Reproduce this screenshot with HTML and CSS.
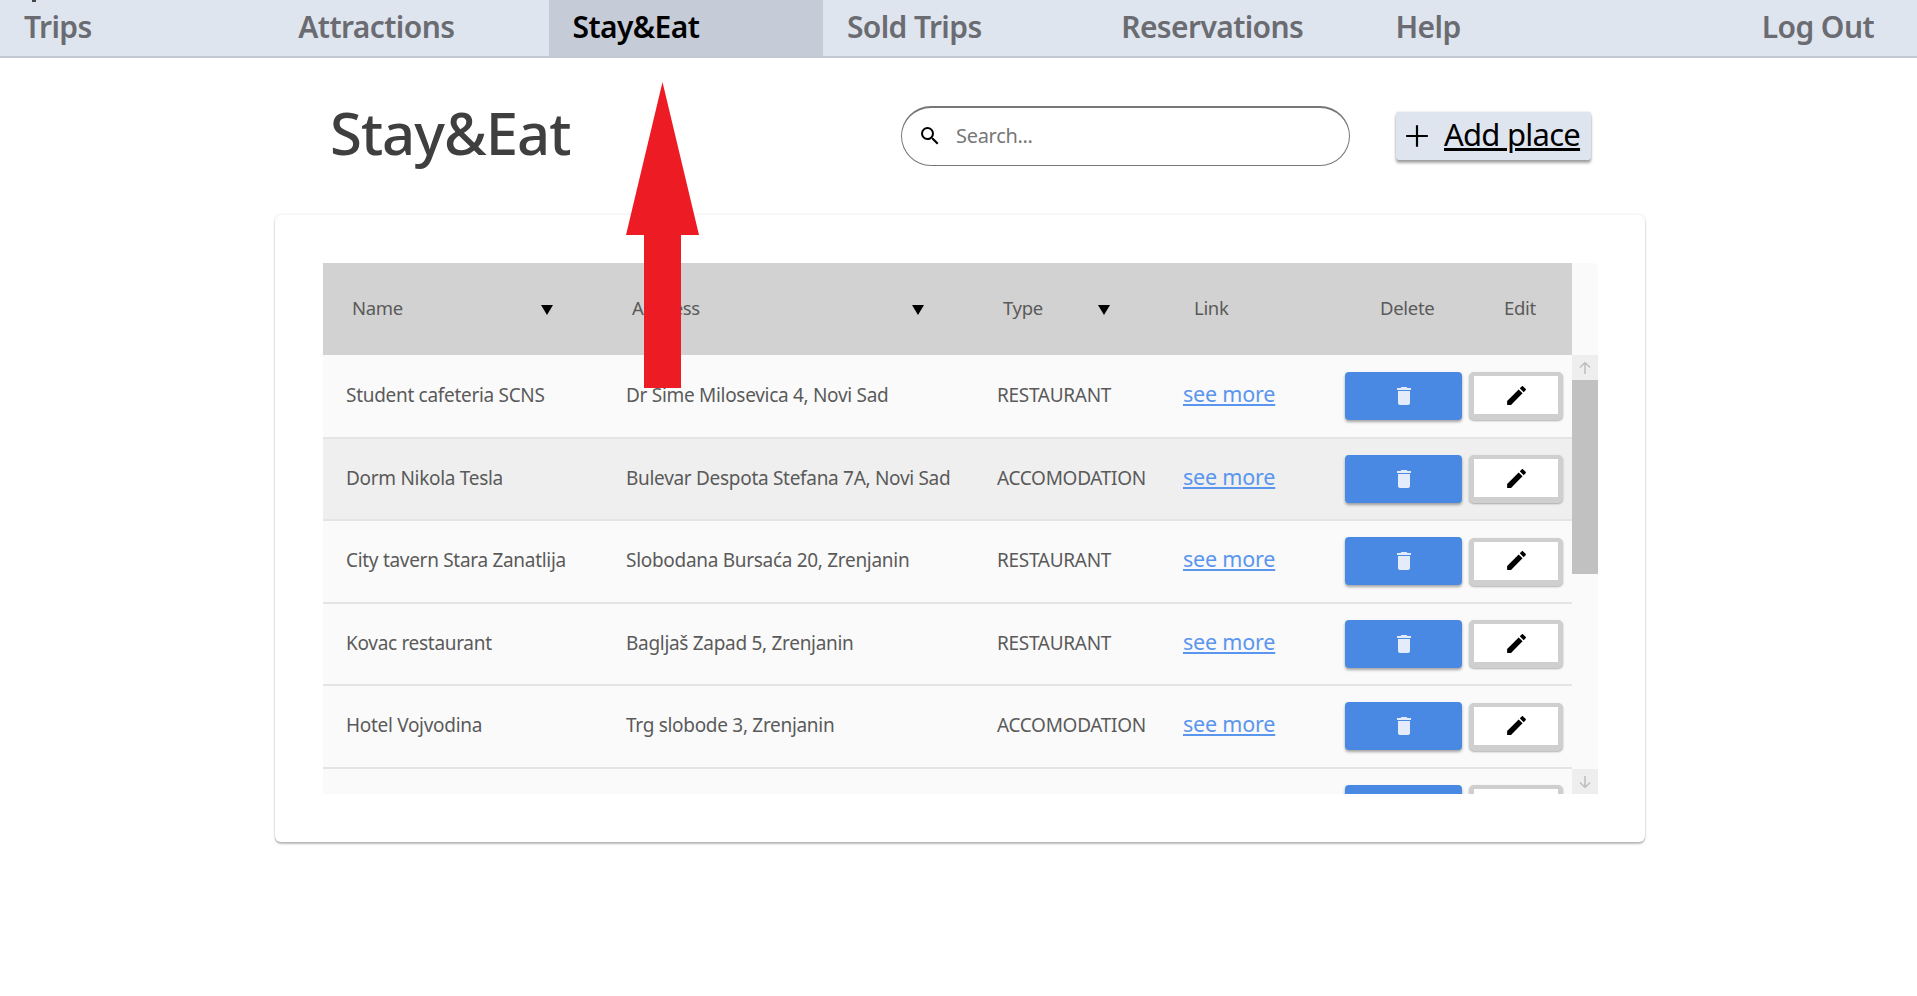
FILE: index.html
```html
<!DOCTYPE html>
<html>
<head>
    <meta name="viewport" content="width=device-width, initial-scale=1.0">
    <title>Stay&amp;Eat</title>
    <link rel="stylesheet" href="styles.css">
</head>
<body>
    <span class="corner-mark"></span>

    <!-- Navigation -->
    <nav class="navbar">
        <a class="nav-item">Trips</a>
        <a class="nav-item">Attractions</a>
        <a class="nav-item active">Stay&amp;Eat</a>
        <a class="nav-item">Sold Trips</a>
        <a class="nav-item">Reservations</a>
        <a class="nav-item">Help</a>
        <a class="nav-item logout">Log Out</a>
    </nav>

    <div class="page-header">
        <h1 class="page-title">Stay&amp;Eat</h1>
        <div class="search-box">
            <svg class="search-icon" viewBox="0 0 24 24"><path d="M15.5 14h-.79l-.28-.27A6.47 6.47 0 0 0 16 9.5 6.5 6.5 0 1 0 9.5 16c1.61 0 3.09-.59 4.23-1.57l.27.28v.79l5 4.99L20.49 19l-4.99-5zm-6 0C7.01 14 5 11.99 5 9.5S7.01 5 9.5 5 14 7.01 14 9.5 11.99 14 9.5 14z"/></svg>
            <span class="search-text">Search...</span>
        </div>
        <a class="add-btn">
            <svg class="add-icon" viewBox="0 0 24 24"><path d="M11 2h2v9h9v2h-9v9h-2v-9H2v-2h9z"/></svg>
            <span class="add-label">Add place</span>
        </a>
    </div>

    <!-- Places table -->
    <div class="card">
        <div class="table-wrap">
            <div class="table-main">
                <table class="places head">
                    <colgroup>
                        <col class="c-name"><col class="c-address"><col class="c-type"><col class="c-link"><col class="c-delete"><col class="c-edit">
                    </colgroup>
                    <tr>
                        <th><div class="th-sort">Name<span class="sort-arrow"></span></div></th>
                        <th><div class="th-sort">Address<span class="sort-arrow"></span></div></th>
                        <th><div class="th-sort">Type<span class="sort-arrow"></span></div></th>
                        <th class="th-link">Link</th>
                        <th class="th-action">Delete</th>
                        <th class="th-action">Edit</th>
                    </tr>
                </table>
                <div class="rows-view">
                    <table class="places">
                        <colgroup>
                            <col class="c-name"><col class="c-address"><col class="c-type"><col class="c-link"><col class="c-delete"><col class="c-edit">
                        </colgroup>
                        <tr>
                            <td>Student cafeteria SCNS</td>
                            <td>Dr Sime Milosevica 4, Novi Sad</td>
                            <td>RESTAURANT</td>
                            <td class="td-link"><a class="see-more">see more</a></td>
                            <td class="td-btn"><button class="btn-delete"><svg viewBox="0 0 24 24"><path d="M6 19c0 1.1.9 2 2 2h8c1.1 0 2-.9 2-2V7H6v12zM19 4h-3.5l-1-1h-5l-1 1H5v2h14V4z"/></svg></button></td>
                            <td class="td-btn td-edit"><button class="btn-edit"><svg viewBox="0 0 24 24"><path d="M3 17.25V21h3.75L17.81 9.94l-3.75-3.75L3 17.25zM20.71 7.04c.39-.39.39-1.02 0-1.41l-2.34-2.34c-.39-.39-1.02-.39-1.41 0l-1.83 1.83 3.75 3.75 1.83-1.83z"/></svg></button></td>
                        </tr>
                        <tr class="row-hover">
                            <td>Dorm Nikola Tesla</td>
                            <td>Bulevar Despota Stefana 7A, Novi Sad</td>
                            <td>ACCOMODATION</td>
                            <td class="td-link"><a class="see-more">see more</a></td>
                            <td class="td-btn"><button class="btn-delete"><svg viewBox="0 0 24 24"><path d="M6 19c0 1.1.9 2 2 2h8c1.1 0 2-.9 2-2V7H6v12zM19 4h-3.5l-1-1h-5l-1 1H5v2h14V4z"/></svg></button></td>
                            <td class="td-btn td-edit"><button class="btn-edit"><svg viewBox="0 0 24 24"><path d="M3 17.25V21h3.75L17.81 9.94l-3.75-3.75L3 17.25zM20.71 7.04c.39-.39.39-1.02 0-1.41l-2.34-2.34c-.39-.39-1.02-.39-1.41 0l-1.83 1.83 3.75 3.75 1.83-1.83z"/></svg></button></td>
                        </tr>
                        <tr>
                            <td>City tavern Stara Zanatlija</td>
                            <td>Slobodana Bursaća 20, Zrenjanin</td>
                            <td>RESTAURANT</td>
                            <td class="td-link"><a class="see-more">see more</a></td>
                            <td class="td-btn"><button class="btn-delete"><svg viewBox="0 0 24 24"><path d="M6 19c0 1.1.9 2 2 2h8c1.1 0 2-.9 2-2V7H6v12zM19 4h-3.5l-1-1h-5l-1 1H5v2h14V4z"/></svg></button></td>
                            <td class="td-btn td-edit"><button class="btn-edit"><svg viewBox="0 0 24 24"><path d="M3 17.25V21h3.75L17.81 9.94l-3.75-3.75L3 17.25zM20.71 7.04c.39-.39.39-1.02 0-1.41l-2.34-2.34c-.39-.39-1.02-.39-1.41 0l-1.83 1.83 3.75 3.75 1.83-1.83z"/></svg></button></td>
                        </tr>
                        <tr>
                            <td>Kovac restaurant</td>
                            <td>Bagljaš Zapad 5, Zrenjanin</td>
                            <td>RESTAURANT</td>
                            <td class="td-link"><a class="see-more">see more</a></td>
                            <td class="td-btn"><button class="btn-delete"><svg viewBox="0 0 24 24"><path d="M6 19c0 1.1.9 2 2 2h8c1.1 0 2-.9 2-2V7H6v12zM19 4h-3.5l-1-1h-5l-1 1H5v2h14V4z"/></svg></button></td>
                            <td class="td-btn td-edit"><button class="btn-edit"><svg viewBox="0 0 24 24"><path d="M3 17.25V21h3.75L17.81 9.94l-3.75-3.75L3 17.25zM20.71 7.04c.39-.39.39-1.02 0-1.41l-2.34-2.34c-.39-.39-1.02-.39-1.41 0l-1.83 1.83 3.75 3.75 1.83-1.83z"/></svg></button></td>
                        </tr>
                        <tr>
                            <td>Hotel Vojvodina</td>
                            <td>Trg slobode 3, Zrenjanin</td>
                            <td>ACCOMODATION</td>
                            <td class="td-link"><a class="see-more">see more</a></td>
                            <td class="td-btn"><button class="btn-delete"><svg viewBox="0 0 24 24"><path d="M6 19c0 1.1.9 2 2 2h8c1.1 0 2-.9 2-2V7H6v12zM19 4h-3.5l-1-1h-5l-1 1H5v2h14V4z"/></svg></button></td>
                            <td class="td-btn td-edit"><button class="btn-edit"><svg viewBox="0 0 24 24"><path d="M3 17.25V21h3.75L17.81 9.94l-3.75-3.75L3 17.25zM20.71 7.04c.39-.39.39-1.02 0-1.41l-2.34-2.34c-.39-.39-1.02-.39-1.41 0l-1.83 1.83 3.75 3.75 1.83-1.83z"/></svg></button></td>
                        </tr>
                        <tr>
                            <td></td>
                            <td></td>
                            <td></td>
                            <td></td>
                            <td class="td-btn"><button class="btn-delete"></button></td>
                            <td class="td-btn td-edit"><button class="btn-edit"></button></td>
                        </tr>
                    </table>
                </div>
            </div>

            <!-- Scrollbar -->
            <div class="scrollbar">
                <div class="scroll-btn"><svg viewBox="0 0 16 16"><path d="M8 2.5 3 7.5M8 2.5l5 5M8 2.5V14"/></svg></div>
                <div class="scroll-track"><div class="scroll-thumb"></div></div>
                <div class="scroll-btn"><svg viewBox="0 0 16 16"><path d="M8 13.5 3 8.5M8 13.5l5-5M8 13.5V2"/></svg></div>
            </div>
        </div>
    </div>

    <!-- Red annotation arrow drawn over the page -->
    <svg class="red-arrow" viewBox="0 0 73 306"><path d="M36.5 0 73 153H55V306H18V153H0z"/></svg>
</body>
</html>
```

FILE: styles.css
```css
body {
    margin: 0;
    background-color: white;
    font-family: "Noto Sans", "Open Sans", sans-serif;
    color: #444;
    height: 996px;
    overflow: hidden;
    position: relative;
}

.corner-mark {
    position: absolute;
    left: 32px;
    top: 0;
    width: 4px;
    height: 2px;
    background-color: #444;
}

/* Navigation */
.navbar {
    display: grid;
    grid-template-columns: repeat(6, 274.3px) 1fr;
    height: 56px;
    background-color: #dfe5ef;
    border-bottom: 2px solid #c3c8d4;
}

.nav-item {
    display: flex;
    align-items: center;
    padding: 0 0 4px 24px;
    font-size: 30px;
    font-weight: 600;
    letter-spacing: -0.6px;
    color: #6a6c72;
}

.nav-item.active {
    background-color: #c5ccd8;
    color: black;
}

.nav-item.logout {
    justify-content: flex-end;
    padding-right: 43px;
}

/* Title row */
.page-header {
    display: flex;
    align-items: center;
    height: 60px;
    margin-top: 48px;
    padding-left: 330px;
}

.page-title {
    width: 571px;
    margin: 0;
    font-size: 58px;
    font-weight: 500;
    letter-spacing: -1px;
    color: #3f3f3f;
    position: relative;
    top: -4px;
}

.search-box {
    display: flex;
    align-items: center;
    box-sizing: border-box;
    width: 449px;
    height: 60px;
    padding: 0 0 2px 16px;
    border: 1px solid #777;
    border-top-width: 2px;
    border-radius: 30px;
}

.search-icon {
    width: 24px;
    height: 24px;
}

.search-text {
    margin-left: 14px;
    font-size: 20px;
    letter-spacing: -0.3px;
    color: #777;
}

.add-btn {
    display: flex;
    align-items: center;
    box-sizing: border-box;
    width: 195px;
    height: 48px;
    margin-left: 46px;
    padding-left: 8px;
    background-color: #dfe5ef;
    border-radius: 3px;
    box-shadow: 0 3px 3px rgba(0, 0, 0, 0.35), 0 0 2px rgba(0, 0, 0, 0.2);
    color: black;
}

.add-icon {
    width: 26px;
    height: 26px;
}

.add-label {
    margin: 0 0 5px 14px;
    font-size: 31px;
    letter-spacing: -0.75px;
    text-decoration: underline;
}

/* Card */
.card {
    box-sizing: border-box;
    width: 1370px;
    height: 627px;
    margin: 49px 0 0 275px;
    padding: 48px;
    border-radius: 6px;
    box-shadow: 0 2px 2px rgba(0, 0, 0, 0.25), 0 0 3px rgba(0, 0, 0, 0.12);
}

.table-wrap {
    display: flex;
    width: 1275px;
    height: 531px;
    background-color: #fafafa;
    border-radius: 5px 5px 0 0;
}

.table-main {
    width: 1249px;
}

.places {
    width: 1249px;
    table-layout: fixed;
    border-collapse: collapse;
    font-size: 19px;
    letter-spacing: -0.3px;
    color: #5a5a5a;
}

.c-name { width: 280px; }
.c-address { width: 371px; }
.c-type { width: 186px; }
.c-link { width: 185px; }
.c-delete { width: 124px; }
.c-edit { width: 103px; }

.places th {
    height: 92px;
    box-sizing: border-box;
    padding: 0 0 4px 29px;
    background-color: #d2d2d2;
    font-weight: 400;
    text-align: left;
    font-size: 18.5px;
}

.places th.th-link {
    padding-left: 34px;
}

.places th.th-action {
    padding-left: 35px;
}

.th-sort {
    display: flex;
    align-items: center;
    justify-content: space-between;
    padding-right: 50px;
}

.sort-arrow {
    width: 0;
    height: 0;
    margin-top: 6px;
    border-left: 6px solid transparent;
    border-right: 6px solid transparent;
    border-top: 10px solid black;
}

.rows-view {
    height: 439px;
    overflow: hidden;
}

.places td {
    height: 82.5px;
    box-sizing: border-box;
    padding: 0 0 2px 23px;
    border-bottom: 2px solid #e4e4e4;
    white-space: nowrap;
}

.places td.td-link {
    padding-bottom: 5px;
}

.places td.td-btn {
    padding: 0;
}

.places td.td-edit {
    padding-top: 1px;
}

.row-hover td {
    background-color: #efefef;
}

.see-more {
    font-size: 21.5px;
    letter-spacing: -0.2px;
    color: #5a96ee;
    text-decoration: underline;
}

.btn-delete, .btn-edit {
    display: flex;
    align-items: center;
    justify-content: center;
    height: 48px;
    padding: 0;
    cursor: pointer;
}

.btn-delete {
    width: 117px;
    background-color: #4a89e3;
    border: none;
    border-radius: 4px;
    box-shadow: 0 2px 3px rgba(0, 0, 0, 0.35);
}

.btn-delete svg {
    width: 24px;
    height: 24px;
    fill: #e4ebfa;
}

.btn-edit {
    box-sizing: border-box;
    width: 94px;
    background-color: white;
    border: 5px solid #cfcfcf;
    border-bottom-width: 6px;
    border-top-width: 4px;
    border-radius: 5px;
    box-shadow: 0 1px 2px rgba(0, 0, 0, 0.3);
}

.btn-edit svg {
    width: 25px;
    height: 25px;
    fill: black;
}

/* Scrollbar */
.scrollbar {
    display: flex;
    flex-direction: column;
    width: 26px;
    margin-top: 92px;
}

.scroll-btn {
    display: flex;
    align-items: center;
    justify-content: center;
    height: 25px;
    background-color: #eeeeee;
}

.scroll-btn svg {
    width: 16px;
    height: 16px;
    fill: none;
    stroke: #bdbdbd;
    stroke-width: 1.5;
}

.scroll-track {
    flex: 1;
    background-color: #fafafa;
}

.scroll-thumb {
    height: 194px;
    background-color: #c1c1c1;
}

/* Annotation */
.red-arrow {
    position: absolute;
    left: 626px;
    top: 82px;
    width: 73px;
    height: 306px;
    fill: #ed1c24;
}
```
